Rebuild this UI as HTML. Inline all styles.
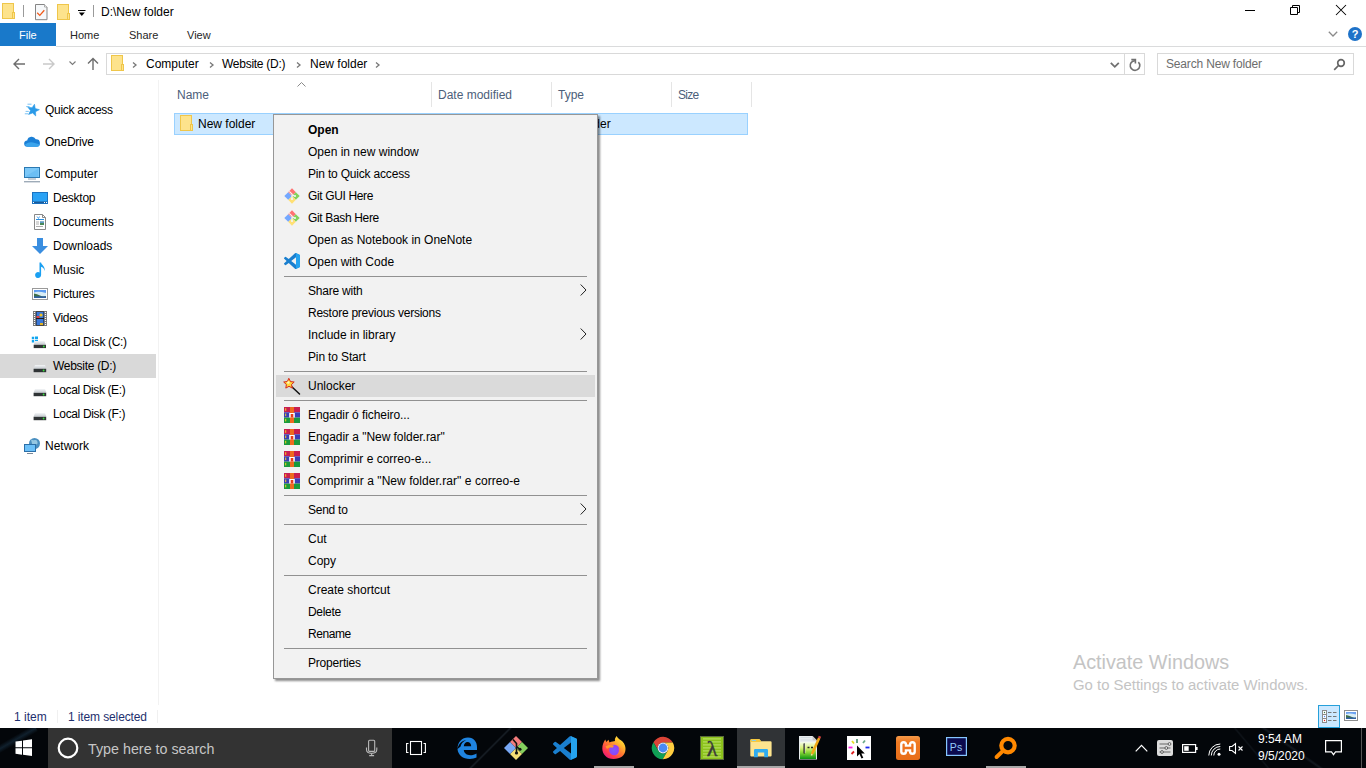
<!DOCTYPE html>
<html><head><meta charset="utf-8">
<style>
*{margin:0;padding:0;box-sizing:border-box}
html,body{width:1366px;height:768px;overflow:hidden;background:#fff;font-family:"Liberation Sans",sans-serif;font-size:12px;color:#000}
.a{position:absolute}
.t{position:absolute;white-space:nowrap;line-height:14px}
svg{position:absolute;overflow:visible}
</style></head><body>
<svg width="0" height="0" style="position:absolute">
<defs>
<linearGradient id="dtop" x1="0" y1="0" x2="0" y2="1"><stop offset="0" stop-color="#f4f6f8"/><stop offset="1" stop-color="#c4c9ce"/></linearGradient>
<symbol id="fold" viewBox="0 0 13 16"><rect x="0.5" y="0.5" width="11" height="15" fill="#fde38c" stroke="#efc64a"/><rect x="10.5" y="9.5" width="2" height="6" fill="#fde38c" stroke="#efc64a"/></symbol>
<symbol id="drive" viewBox="0 0 14 8"><path d="M2 0.5h10l1.5 3.5h-13z" fill="#d8d8d8"/><rect x="0.5" y="4" width="13" height="3.5" fill="#3a3a3a"/><rect x="10" y="5" width="2" height="1.2" fill="#5fd35f"/></symbol>
<symbol id="rar" viewBox="0 0 16 16"><rect x="0" y="0" width="16" height="5.3" fill="#c81e50"/><rect x="0" y="5.3" width="16" height="5.3" fill="#3b3db5"/><rect x="0" y="10.6" width="16" height="5.4" fill="#1a9a3c"/><rect x="6" y="0" width="4" height="16" fill="#ee6a1e"/><rect x="5.2" y="6" width="5.6" height="4.5" fill="#fff"/><rect x="6.7" y="7" width="2.6" height="3.5" fill="#e83a1a"/><rect x="1.2" y="1.2" width="1" height="2.6" fill="#f8d020"/><rect x="1.2" y="6.5" width="1" height="2.6" fill="#f8d020"/><rect x="1.2" y="11.8" width="1" height="2.6" fill="#f8d020"/></symbol>
<symbol id="git" viewBox="0 0 16 16"><path d="M8 0.3L11.85 4.15 8 8 4.15 4.15z" fill="#ff7272"/><path d="M11.85 4.15L15.7 8 11.85 11.85 8 8z" fill="#82d25a"/><path d="M8 8L11.85 11.85 8 15.7 4.15 11.85z" fill="#ffe074"/><path d="M4.15 4.15L8 8 4.15 11.85 0.3 8z" fill="#74a8ff"/><path d="M5.3 3.3L8 6v5.5M8 6.5l2.5 1.8" fill="none" stroke="#f2f2f2" stroke-width="1.1"/><circle cx="11" cy="8" r="1.1" fill="#f2f2f2"/><circle cx="8" cy="11" r="1.1" fill="#f2f2f2"/></symbol>
</defs></svg>

<!-- ===== TITLE BAR ===== -->
<svg style="left:2px;top:3px" width="13" height="16"><use href="#fold"/></svg>
<div class="a" style="left:23px;top:5px;width:1px;height:12px;background:#9a9a9a"></div>
<svg style="left:35px;top:4px" width="13" height="17" viewBox="0 0 13 17"><path d="M0.5 0.5h9l2.5 2.5v12.7H0.5z" fill="#f6f8fa" stroke="#858585"/><path d="M9.5 0.5v2.5h2.5" fill="#fff" stroke="#9a9a9a" stroke-width=".8"/><path d="M2.2 8.8L4.8 11.4 9.3 6.2" fill="none" stroke="#f05a1a" stroke-width="1.3"/></svg>
<svg style="left:57px;top:4px" width="13" height="16"><use href="#fold"/></svg>
<svg style="left:78px;top:10px" width="8" height="7" viewBox="0 0 8 7"><rect x="0" y="0" width="7.5" height="1" fill="#000"/><path d="M0.8 2.6h6L3.8 6z" fill="#000"/></svg>
<div class="a" style="left:93px;top:5px;width:1px;height:12px;background:#9a9a9a"></div>
<div class="t" style="left:101px;top:5px;">D:\New folder</div>
<!-- window controls -->
<div class="a" style="left:1245px;top:10px;width:10px;height:1px;background:#000"></div>
<svg style="left:1290px;top:5px" width="11" height="11"><path d="M0.5 2.5h7v7h-7z" fill="none" stroke="#000"/><path d="M2.5 2.5v-2h7v7h-2" fill="none" stroke="#000"/></svg>
<svg style="left:1336px;top:5px" width="10" height="10"><path d="M0 0L10 10M10 0L0 10" stroke="#000" stroke-width="1.05"/></svg>

<!-- ===== RIBBON ===== -->
<div class="a" style="left:0;top:23px;width:56px;height:23px;background:#1979ca"></div>
<div class="t" style="left:19px;top:28px;color:#fff;font-size:11px">File</div>
<div class="t" style="left:70px;top:28px;color:#262626;font-size:11px">Home</div>
<div class="t" style="left:129px;top:28px;color:#262626;font-size:11px">Share</div>
<div class="t" style="left:187px;top:28px;color:#262626;font-size:11px">View</div>
<div class="a" style="left:56px;top:46px;width:1310px;height:1px;background:#dadbdc"></div>
<svg style="left:1328px;top:31px" width="10" height="7"><path d="M0.8 0.8L5 5 9.2 0.8" fill="none" stroke="#8a8a8a" stroke-width="1.3"/></svg>
<svg style="left:1348px;top:27px" width="14" height="14"><circle cx="7" cy="7" r="7" fill="#1e72c8"/><text x="7" y="11.2" font-family="Liberation Sans" font-weight="bold" font-size="11" fill="#fff" text-anchor="middle">?</text></svg>

<!-- ===== ADDRESS BAR ===== -->
<svg style="left:13px;top:58px" width="13" height="12"><path d="M12 6H1.5M6 1L1 6l5 5" fill="none" stroke="#6d6d6d" stroke-width="1.4"/></svg>
<svg style="left:43px;top:58px" width="13" height="12"><path d="M0 6h10.5M6 1l5 5-5 5" fill="none" stroke="#c9c9c9" stroke-width="1.4"/></svg>
<svg style="left:69px;top:61px" width="7" height="5"><path d="M0.5 0.5L3.5 3.5 6.5 0.5" fill="none" stroke="#7a7a7a" stroke-width="1.1"/></svg>
<svg style="left:87px;top:57px" width="12" height="13"><path d="M6 13V1.5M1 6.5l5-5 5 5" fill="none" stroke="#6d6d6d" stroke-width="1.4"/></svg>
<div class="a" style="left:106px;top:53px;width:1039px;height:22px;border:1px solid #d9d9d9"></div>
<svg style="left:111px;top:55px" width="13" height="16"><use href="#fold"/></svg>
<svg style="left:132px;top:62px" width="5" height="6"><path d="M1 0.5L4 3 1 5.5" fill="none" stroke="#777" stroke-width="1.3"/></svg>
<div class="t" style="left:146px;top:57px">Computer</div>
<svg style="left:209px;top:62px" width="5" height="6"><path d="M1 0.5L4 3 1 5.5" fill="none" stroke="#777" stroke-width="1.3"/></svg>
<div class="t" style="left:222px;top:57px;letter-spacing:-0.27px">Website (D:)</div>
<svg style="left:296px;top:62px" width="5" height="6"><path d="M1 0.5L4 3 1 5.5" fill="none" stroke="#777" stroke-width="1.3"/></svg>
<div class="t" style="left:310px;top:57px">New folder</div>
<svg style="left:375px;top:62px" width="5" height="6"><path d="M1 0.5L4 3 1 5.5" fill="none" stroke="#777" stroke-width="1.3"/></svg>
<svg style="left:1110px;top:62px" width="10" height="7" viewBox="0 0 10 7"><path d="M0.8 0.8L4.8 4.8 8.8 0.8" fill="none" stroke="#707070" stroke-width="1.8"/></svg>
<div class="a" style="left:1124px;top:54px;width:1px;height:20px;background:#d9d9d9"></div>
<svg style="left:1129px;top:58px" width="12" height="14" viewBox="0 0 12 14"><path d="M6 2.7A4.8 4.8 0 1 0 9.39 4.11" fill="none" stroke="#707070" stroke-width="1.6"/><path d="M2.3 1.6H6.4V5.5" fill="none" stroke="#707070" stroke-width="1.6"/></svg>
<div class="a" style="left:1157px;top:53px;width:197px;height:22px;border:1px solid #d9d9d9"></div>
<div class="t" style="left:1166px;top:57px;color:#6d6d6d;letter-spacing:-0.17px">Search New folder</div>
<svg style="left:1333px;top:58px" width="13" height="13"><circle cx="8" cy="5" r="3.3" fill="none" stroke="#666" stroke-width="1.7"/><path d="M5.5 7.5L1.2 11.8" stroke="#666" stroke-width="1.7"/></svg>

<!-- ===== NAV PANE ===== -->
<div class="a" style="left:0;top:354px;width:156px;height:24px;background:#d9d9d9"></div>
<div class="a" style="left:158px;top:80px;width:1px;height:625px;background:#f2f2f2"></div>
<div class="t" style="left:45px;top:103px;letter-spacing:-0.3px">Quick access</div>
<div class="t" style="left:45px;top:135px;letter-spacing:-0.25px">OneDrive</div>
<div class="t" style="left:45px;top:167px">Computer</div>
<div class="t" style="left:53px;top:191px;letter-spacing:-0.25px">Desktop</div>
<div class="t" style="left:53px;top:215px">Documents</div>
<div class="t" style="left:53px;top:239px">Downloads</div>
<div class="t" style="left:53px;top:263px">Music</div>
<div class="t" style="left:53px;top:287px;letter-spacing:-0.22px">Pictures</div>
<div class="t" style="left:53px;top:311px;letter-spacing:-0.3px">Videos</div>
<div class="t" style="left:53px;top:335px;letter-spacing:-0.33px">Local Disk (C:)</div>
<div class="t" style="left:53px;top:359px;letter-spacing:-0.29px">Website (D:)</div>
<div class="t" style="left:53px;top:383px;letter-spacing:-0.38px">Local Disk (E:)</div>
<div class="t" style="left:53px;top:407px;letter-spacing:-0.35px">Local Disk (F:)</div>
<div class="t" style="left:45px;top:439px">Network</div>


<!-- nav icons -->
<svg style="left:24px;top:103px" width="17" height="14" viewBox="0 0 17 14"><path d="M10.49 1.24 L11.21 5.49 L15.37 6.65 L11.54 8.65 L11.72 12.96 L8.64 9.94 L4.59 11.45 L6.51 7.58 L3.83 4.20 L8.10 4.83z" fill="#2a9ae8" stroke="#2a9ae8" stroke-width=".6" stroke-linejoin="round"/><path d="M3.5 1.2h4M2.2 3.6h3.3M1.6 8.4h3.2M0.8 10.8h3.3" stroke="#6cbcf2" stroke-width=".9"/></svg>
<svg style="left:24px;top:136px" width="16" height="11" viewBox="0 0 16 11"><path d="M3.5 10.8a3.2 3.2 0 0 1-0.3-6.4A4.6 4.6 0 0 1 11.8 3.3a3.6 3.6 0 0 1 0.7 7.5z" fill="#1a7fd6"/><path d="M1 8.5Q5 5.5 9 6.5T15.8 8.5a3 3 0 0 1-3.3 2.3H3.5A3 3 0 0 1 1 8.5z" fill="#3aa4ec"/></svg>
<svg style="left:24px;top:167px" width="16" height="16" viewBox="0 0 16 16"><rect x="0.5" y="0.5" width="15" height="10" fill="#7cc8f8" stroke="#2b79b2"/><path d="M2 9L14 2v8H2z" fill="#5ab4f0" opacity=".5"/><rect x="4" y="11.5" width="8" height="1" fill="#8fa0b0"/><rect x="0" y="14" width="16" height="1.4" fill="#9eabb8"/></svg>
<svg style="left:32px;top:192px" width="16" height="12" viewBox="0 0 16 12"><rect x="0.5" y="0.5" width="15" height="11" fill="#2aa2f5" stroke="#1a72c2"/><rect x="1" y="9.5" width="14" height="1.6" fill="#1a5a9a"/><rect x="1" y="10" width="1" height="1" fill="#fff"/><rect x="12" y="10" width="1" height="1" fill="#fff"/><rect x="14" y="10" width="1" height="1" fill="#fff"/></svg>
<svg style="left:34px;top:214px" width="12" height="16" viewBox="0 0 12 16"><path d="M0.5 0.5h8l3 3v12h-11z" fill="#fff" stroke="#888"/><path d="M8.5 0.5v3h3" fill="none" stroke="#888"/><path d="M2 5.5h8" stroke="#2b8ee0" stroke-width="1"/><path d="M3 2.5l1.5 2 1-2" stroke="#2b8ee0" stroke-width="0.8" fill="none"/><path d="M2 8h3M2 10h3M2 12.5h7" stroke="#999" stroke-width="0.8"/><rect x="6" y="7.5" width="4" height="3.5" fill="#4a8a5a"/><rect x="6" y="7.5" width="4" height="1.2" fill="#6aa0f0"/></svg>
<svg style="left:32px;top:238px" width="16" height="16" viewBox="0 0 16 16"><path d="M5 0h6v8h5L8 16 0 8h5z" fill="#3a8ee0"/></svg>
<svg style="left:34px;top:262px" width="12" height="16" viewBox="0 0 12 16"><path d="M5.5 0.5h1.6c0.3 2.5 4.5 4 3.5 8.5-0.4-2.5-2-3.8-3.5-4.2V13a3 3 0 1 1-1.6-2.6z" fill="#1aa0f2"/></svg>
<svg style="left:32px;top:288px" width="16" height="12" viewBox="0 0 16 12"><rect x="0.5" y="0.5" width="15" height="11" fill="#fff" stroke="#9a9a9a"/><rect x="2" y="2" width="12" height="8" fill="#5a9af0"/><path d="M2 4.5Q6 3 14 5V10H2z" fill="#d8ecf5"/><path d="M2 5.5Q5 6 8 7.5T14 8V10H2z" fill="#3f6f48"/><rect x="2" y="8.3" width="12" height="1.7" fill="#3060a0"/></svg>
<svg style="left:33px;top:311px" width="14" height="15" viewBox="0 0 14 15"><rect x="0" y="0" width="14" height="15" fill="#777"/><rect x="3" y="0.5" width="8" height="14" fill="#1a1a1a"/><rect x="3.5" y="1" width="7" height="6" fill="#3a78d8"/><rect x="3.5" y="8" width="7" height="6" fill="#3a78d8"/><circle cx="8" cy="4" r="1.6" fill="#f0c020"/><rect x="3.5" y="5" width="3" height="2" fill="#e04040"/><rect x="7" y="12" width="3" height="2" fill="#e0b020"/><path d="M1.5 1v13M12.5 1v13" stroke="#fff" stroke-width="1.2" stroke-dasharray="1 1"/></svg>
<svg style="left:31px;top:336px" width="16" height="13" viewBox="0 0 16 13"><path d="M0.8 0.8h2.4v2.4H0.8zM4 0.5h3v2.7H4zM0.8 4h2.4v2.4H0.8zM4 4h3v2.8H4z" fill="#12a6f0"/><path d="M4 5h9.5l1.3 3.7H2.7z" fill="url(#dtop)"/><rect x="2.7" y="8.8" width="12.3" height="3.3" fill="#303436"/><circle cx="12.8" cy="10.5" r="0.9" fill="#36e03a"/></svg>
<svg style="left:33px;top:365px" width="14" height="8" viewBox="0 0 14 8"><path d="M2 0h10l1.4 3.7H0.6z" fill="url(#dtop)"/><rect x="0.6" y="3.8" width="12.6" height="3.4" fill="#303436"/><circle cx="10.6" cy="5.5" r="0.9" fill="#36e03a"/></svg>
<svg style="left:33px;top:389px" width="14" height="8" viewBox="0 0 14 8"><path d="M2 0h10l1.4 3.7H0.6z" fill="url(#dtop)"/><rect x="0.6" y="3.8" width="12.6" height="3.4" fill="#303436"/><circle cx="10.6" cy="5.5" r="0.9" fill="#36e03a"/></svg>
<svg style="left:33px;top:413px" width="14" height="8" viewBox="0 0 14 8"><path d="M2 0h10l1.4 3.7H0.6z" fill="url(#dtop)"/><rect x="0.6" y="3.8" width="12.6" height="3.4" fill="#303436"/><circle cx="10.6" cy="5.5" r="0.9" fill="#36e03a"/></svg>
<svg style="left:24px;top:437px" width="17" height="17" viewBox="0 0 17 17"><circle cx="10.5" cy="6.5" r="5.5" fill="#4a8fc0"/><path d="M7 2.5q2 1 4 0.5t2.5 2-2 2.5-3 1" fill="#a8d4ea" opacity=".8"/><rect x="0.5" y="7.5" width="11" height="7" fill="#6cc0f8" stroke="#2b6fa8"/><rect x="3" y="16" width="6" height="1" fill="#7a8898"/></svg>

<!-- ===== FILE LIST ===== -->
<svg style="left:297px;top:82px" width="9" height="5"><path d="M0.5 4.5L4.5 0.5 8.5 4.5" fill="none" stroke="#8a8a8a" stroke-width="1"/></svg>
<div class="t" style="left:177px;top:88px;color:#4c607a">Name</div>
<div class="a" style="left:431px;top:82px;width:1px;height:25px;background:#e5e5e5"></div>
<div class="t" style="left:438px;top:88px;color:#4c607a">Date modified</div>
<div class="a" style="left:551px;top:82px;width:1px;height:25px;background:#e5e5e5"></div>
<div class="t" style="left:558px;top:88px;color:#4c607a">Type</div>
<div class="a" style="left:671px;top:82px;width:1px;height:25px;background:#e5e5e5"></div>
<div class="t" style="left:678px;top:88px;color:#4c607a;letter-spacing:-0.7px">Size</div>
<div class="a" style="left:751px;top:82px;width:1px;height:25px;background:#e5e5e5"></div>
<div class="a" style="left:174px;top:113px;width:574px;height:22px;background:#cce8ff;border:1px solid #99d1ff"></div>
<svg style="left:180px;top:115px" width="13" height="16"><use href="#fold"/></svg>
<div class="t" style="left:198px;top:117px">New folder</div>
<div class="t" style="left:558px;top:117px">File folder</div>

<!-- ===== STATUS BAR ===== -->
<div class="t" style="left:14px;top:710px;color:#1e2f6e">1 item</div>
<div class="a" style="left:57px;top:710px;width:1px;height:13px;background:#f0f0f0"></div>
<div class="t" style="left:68px;top:710px;color:#1e2f6e;letter-spacing:-0.12px">1 item selected</div>
<div class="a" style="left:157px;top:710px;width:1px;height:13px;background:#f0f0f0"></div>
<div class="a" style="left:1318px;top:705px;width:22px;height:23px;background:#cce8ff;border:1px solid #26a0da"></div>
<svg style="left:1322px;top:710px" width="15" height="14" viewBox="0 0 15 14"><rect x="0.5" y="0.5" width="4" height="12" fill="#fff" stroke="#8a8a8a"/><path d="M0.5 4.5h4M0.5 8.5h4" stroke="#8a8a8a"/><circle cx="2.5" cy="2.5" r=".7" fill="#3a7a4a"/><circle cx="2.5" cy="6.5" r=".7" fill="#4a8af0"/><circle cx="2.5" cy="10.5" r=".7" fill="#e02020"/><path d="M6 2.5h3.5M11 2.5h3.5M6 6.5h3.5M11 6.5h3.5M6 10.5h3.5M11 10.5h3.5" stroke="#777" stroke-width="1"/></svg>
<svg style="left:1344px;top:710px" width="14" height="11" viewBox="0 0 14 11"><rect x="0.5" y="0.5" width="13" height="10" fill="#fff" stroke="#8e8e8e"/><rect x="2" y="2" width="10" height="7" fill="#6aa0f0"/><path d="M2 4q4-1 10 0.5V9H2z" fill="#d8ecf5"/><path d="M2 5q3 0.5 6 2t4 0.5V9H2z" fill="#3f6f48"/><rect x="2" y="7.5" width="10" height="1.5" fill="#3060a0"/></svg>
<!-- watermark -->
<div class="t" style="left:1073px;top:651px;color:#c4c4c4;font-size:19.8px;line-height:22px">Activate Windows</div>
<div class="t" style="left:1073px;top:677px;color:#c4c4c4;font-size:14.9px;line-height:17px">Go to Settings to activate Windows.</div>

<!-- ===== TASKBAR ===== -->
<div class="a" style="left:0;top:728px;width:1366px;height:40px;background:#03060a;overflow:hidden">
<div class="a" style="left:-20px;top:-30px;width:8px;height:120px;background:linear-gradient(90deg,transparent,rgba(40,80,110,.35),transparent);transform:rotate(60deg)"></div>
<div class="a" style="left:484px;top:-20px;width:3px;height:90px;background:linear-gradient(90deg,transparent,rgba(90,110,130,.25),transparent);transform:rotate(45deg)"></div>
<div class="a" style="left:1290px;top:-40px;width:4px;height:120px;background:linear-gradient(90deg,transparent,rgba(90,110,130,.18),transparent);transform:rotate(-55deg)"></div>
<div class="a" style="left:1250px;top:-40px;width:3px;height:120px;background:linear-gradient(90deg,transparent,rgba(90,110,130,.12),transparent);transform:rotate(-40deg)"></div>
</div>
<div class="a" style="left:48px;top:728px;width:344px;height:40px;background:#333"></div>
<svg style="left:15px;top:739px" width="18" height="18"><path d="M0.5 2.6L7 1.7v6.5H0.5zM8 1.55L17 0.3v7.9H8zM0.5 9.2H7v6.5L0.5 14.8zM8 9.2h9v7.9L8 15.85z" fill="#fff"/></svg>
<svg style="left:57px;top:737px" width="22" height="22"><circle cx="11" cy="11" r="9.3" fill="none" stroke="#fff" stroke-width="2.2"/></svg>
<div class="t" style="left:88px;top:741px;color:#c6c6c6;font-size:14.3px;line-height:17px">Type here to search</div>
<svg style="left:365px;top:739px" width="13" height="18" viewBox="0 0 13 18"><rect x="3.6" y="1.2" width="6.1" height="11.2" rx="1" fill="none" stroke="#b8b8b8" stroke-width="1.1"/><path d="M1.5 8.6V10.6Q1.5 14.4 6.65 14.4T11.8 10.6V8.6M6.65 14.4V16.5M4.2 16.6H9.1" fill="none" stroke="#b8b8b8" stroke-width="1.1"/></svg>


<!-- taskbar icons -->
<div class="a" style="left:737px;top:728px;width:48px;height:40px;background:#303336"></div>
<div class="a" style="left:737px;top:766px;width:48px;height:2px;background:#a8a8a8"></div>
<div class="a" style="left:594px;top:766px;width:40px;height:2px;background:#a8a8a8"></div>
<div class="a" style="left:986px;top:766px;width:40px;height:2px;background:#a8a8a8"></div>
<svg style="left:406px;top:741px" width="20" height="14" viewBox="0 0 20 14"><rect x="4.5" y="0.5" width="11" height="13" fill="none" stroke="#fff" stroke-width="1.1"/><path d="M2.5 2.5H0.6v9h1.9M17.5 2.5h1.9v9h-1.9" fill="none" stroke="#fff" stroke-width="1.1"/></svg>
<svg style="left:457px;top:737px" width="20" height="22" viewBox="0 0 20 22"><path fill="#1f84e0" fill-rule="evenodd" d="M0.5 12C0.5 5 5 0.5 11 0.5 17 0.5 20 5 20 10.5V13H6.8c.3 3.3 3 5.2 6.5 5.2 2.4 0 4.4-.7 6.2-1.8v4.2C17.6 21.5 15.4 22 12.8 22 5.8 22 1 18 0.5 12zM6.8 9.3h7.4c0-2.6-1.5-4.3-3.7-4.3-2 0-3.5 1.6-3.7 4.3zM0.5 12C1.5 6.5 5 3.5 9 3.2 5.5 4.5 4 7 3.6 9.6z"/></svg>
<svg style="left:504px;top:736px" width="24" height="24" viewBox="0 0 24 24"><path d="M12 0L18 6 12 12 6 6z" fill="#f47c7c"/><path d="M18 6L24 12 18 18 12 12z" fill="#86cf5e"/><path d="M12 12L18 18 12 24 6 18z" fill="#f5de76"/><path d="M6 6L12 12 6 18 0 12z" fill="#78a8f5"/><path d="M9 3.5l3.5 4v9M12.5 10.5l3 2.5" fill="none" stroke="#111" stroke-width="1.6"/><circle cx="12.5" cy="17" r="1.6" fill="#111"/><circle cx="16" cy="13.2" r="1.5" fill="#111"/></svg>
<svg style="left:553px;top:736px" width="24" height="24" viewBox="0 0 100 100"><path d="M70.9 99.3a6.2 6.2 0 0 0 5-.2l20.6-9.9A6.25 6.25 0 0 0 100 83.6V16.4a6.25 6.25 0 0 0-3.5-5.6L75.9.9a6.2 6.2 0 0 0-7.1 1.2L29.4 38 12.2 25a4.2 4.2 0 0 0-5.3.2l-5.5 5a4.2 4.2 0 0 0 0 6.2L16.3 50 1.4 63.6a4.2 4.2 0 0 0 0 6.2l5.5 5a4.2 4.2 0 0 0 5.3.2l17.2-13L68.8 97.9a6.2 6.2 0 0 0 2.1 1.4zM75 27.3L45.1 50 75 72.7z" fill="#1a7fcf" fill-rule="evenodd"/><path d="M75 .6l21.5 10.2a6.25 6.25 0 0 1 3.5 5.6v67.2a6.25 6.25 0 0 1-3.5 5.6L75 99.4z" fill="#25a3ef"/></svg>
<svg style="left:602px;top:736px" width="24" height="24" viewBox="0 0 24 24"><defs><linearGradient id="ffg" x1="1" y1="0" x2="0.2" y2="1"><stop offset="0" stop-color="#fff44f"/><stop offset=".3" stop-color="#ffc22e"/><stop offset=".55" stop-color="#ff7a30"/><stop offset=".8" stop-color="#ff3a50"/><stop offset="1" stop-color="#e8157e"/></linearGradient><radialGradient id="ffp" cx=".45" cy=".55" r=".6"><stop offset="0" stop-color="#7a5cff"/><stop offset="1" stop-color="#9a3af0"/></radialGradient></defs><path d="M14.5 0C16 2.5 18.5 4 20.5 5.5 23 8 23.5 11 23.5 13 23.5 19.5 18.5 23 11.5 23 4.5 23 0.3 18 0.3 12.5 0.3 9 1.5 6 3.3 3.5L4.3 6 6.5 3.8 7.5 6.5C9.5 5 12 5.5 13 5 12.5 3 13.5 1.5 14.5 0z" fill="url(#ffg)"/><circle cx="12.3" cy="14" r="5.2" fill="url(#ffp)"/><path d="M3.5 10.5C5.5 8.5 9.5 8.5 12 9.8L10.5 11.8C8.5 11.3 6.5 11.8 5 13z" fill="#ff9a2a"/><path d="M16.5 12.5C17.5 15 16.5 18 13.5 19.5 17.5 19 19.5 15.5 18.5 12z" fill="#ff8a30" opacity=".7"/></svg>
<svg style="left:651px;top:736px" width="24" height="24" viewBox="0 0 24 24"><path d="M21.81 6.6A11.2 11.2 0 0 0 2.42 6.2L7.32 14.7A5.4 5.4 0 0 1 12 6.6Z" fill="#db4437"/><path d="M2.42 6.2A11.2 11.2 0 0 0 11.77 23.2L16.68 14.7A5.4 5.4 0 0 1 7.32 14.7Z" fill="#10a055"/><path d="M11.77 23.2A11.2 11.2 0 0 0 21.81 6.6L12 6.6A5.4 5.4 0 0 1 16.68 14.7Z" fill="#ffcd40"/><circle cx="12" cy="12" r="5.4" fill="#f4f4f4"/><circle cx="12" cy="12" r="4.4" fill="#4a8af4"/></svg>
<svg style="left:700px;top:736px" width="24" height="24" viewBox="0 0 24 24"><rect x="0.5" y="0.5" width="23" height="23" fill="#8cc21c" stroke="#5a6a3a"/><path d="M3 2.8h18M3 5.8h18M3 8.8h18M3 11.8h18M3 14.8h18M3 17.8h18M3 20.8h18" stroke="#b2dc5a" stroke-width="1.2"/><text x="12" y="19.6" font-family="Liberation Serif" font-size="22" fill="#3a3a3a" stroke="#3a3a3a" stroke-width="0.5" text-anchor="middle">λ</text></svg>
<svg style="left:750px;top:739px" width="22" height="19" viewBox="0 0 22 19"><path d="M0.3 1.5Q0.3 0 1.5 0H8.5Q10 0 10.5 1.5L11 2.2H20.5Q21.6 2.2 21.6 3.3V16.4Q21.6 17.4 20.5 17.4H1.4Q0.3 17.4 0.3 16.4z" fill="#fde48e"/><path d="M0.3 1.5Q0.3 0 1.5 0H8.5Q10 0 10.5 1.5L11 2.9H0.3z" fill="#f6c93e"/><rect x="1.6" y="1" width="4.5" height="1.1" rx=".5" fill="#8fd0e0"/><path d="M4 18.2V11.2Q4 10 5.2 10H16.8Q18 10 18 11.2V18.2H14.2V13.6H7.8V18.2z" fill="#30acef"/></svg>
<svg style="left:798px;top:735px" width="24" height="25" viewBox="0 0 24 25"><defs><linearGradient id="npg" x1="0" y1="0" x2="0" y2="1"><stop offset="0" stop-color="#f4faf0"/><stop offset=".35" stop-color="#d8f27a"/><stop offset=".6" stop-color="#8ed83a"/><stop offset="1" stop-color="#0a9410"/></linearGradient></defs><path d="M1 1h13.5l4.5 4.5V24.5H1z" fill="#e8ecee"/><rect x="2" y="7" width="16" height="17" fill="url(#npg)"/><path d="M14.5 1v4.5H19" fill="#c8c8c8"/><path d="M2.5 2.5h11M2.5 5h12" stroke="#d4dde2" stroke-width="1"/><path d="M5.5 8.5h1.5v10H5.5z" fill="#1a1a1a"/><path d="M7 9v9" stroke="#f0f0f0" stroke-width=".6"/><path d="M9.5 12.5h2M13 12.5h2" stroke="#222" stroke-width="1.4"/><path d="M21.2 3L14 19" stroke="#f0a818" stroke-width="2.6"/><path d="M21.2 3l.8-1.8" stroke="#d84040" stroke-width="2.6"/><path d="M14 19l-.6 1.5" stroke="#f6d9a0" stroke-width="1.6"/></svg>
<svg style="left:847px;top:736px" width="24" height="24" viewBox="0 0 24 24"><rect width="24" height="24" fill="#fff"/><path d="M10 3v4" stroke="#5a9a7a" stroke-width="1.8"/><path d="M5 5l2 2.5" stroke="#e8e020" stroke-width="1.8"/><path d="M18 4.5l-2 2.5" stroke="#6aaa8a" stroke-width="1.8"/><path d="M1.5 11.5h4" stroke="#ff20e0" stroke-width="1.8"/><path d="M18.5 11.5h4" stroke="#1a2af0" stroke-width="1.8"/><path d="M4.5 18l2.5-2.5" stroke="#e02020" stroke-width="1.8"/><path d="M10 9.5v11l2.5-2.5 2 4.5 1.8-.8-2-4.3h3.5z" fill="#000"/></svg>
<svg style="left:896px;top:736px" width="24" height="24" viewBox="0 0 24 24"><defs><linearGradient id="xg" x1="0" y1="0" x2="0" y2="1"><stop offset="0" stop-color="#f59a4a"/><stop offset=".25" stop-color="#f07a22"/><stop offset="1" stop-color="#e86e1a"/></linearGradient></defs><rect width="24" height="24" rx="2.5" fill="url(#xg)"/><path d="M7.6 8.6V15.4M16.4 8.6V15.4M7.6 12H16.4" fill="none" stroke="#fff" stroke-width="7" stroke-linecap="round" stroke-linejoin="round"/><path d="M7.6 8.6V15.4M16.4 8.6V15.4M7.6 12H16.4" fill="none" stroke="#ee7420" stroke-width="2.3" stroke-linecap="round" stroke-linejoin="round"/></svg>
<svg style="left:946px;top:737px" width="21" height="19" viewBox="0 0 21 19"><rect x="0.6" y="0.6" width="19.8" height="17.8" fill="#0b0a4e" stroke="#86c6ff" stroke-width="1.2"/><text x="3.8" y="13.6" font-family="Liberation Sans" font-size="10.5" fill="#94ccfa" letter-spacing="0.3">Ps</text></svg>
<svg style="left:994px;top:736px" width="24" height="24" viewBox="0 0 24 24"><circle cx="14" cy="9.6" r="6.7" fill="none" stroke="#ff8800" stroke-width="4.2"/><path d="M9.2 14.6L2.6 21" stroke="#ff8800" stroke-width="4" stroke-linecap="round"/></svg>
<!-- tray -->
<svg style="left:1135px;top:744px" width="13" height="8" viewBox="0 0 13 8"><path d="M0.7 7.3L6.5 1.3l5.8 6" fill="none" stroke="#fff" stroke-width="1.2"/></svg>
<svg style="left:1157px;top:740px" width="16" height="16" viewBox="0 0 16 16"><rect x="0" y="0" width="16" height="16" rx="2" fill="#dcdcdc"/><path d="M2.5 4h11M2.5 8h11M2.5 12h11" stroke="#666" stroke-width="1"/><circle cx="12.5" cy="4" r="1.4" fill="#e8e8e8" stroke="#555" stroke-width=".9"/><circle cx="9.3" cy="8" r="1.4" fill="#e8e8e8" stroke="#555" stroke-width=".9"/><circle cx="5" cy="12" r="1.4" fill="#e8e8e8" stroke="#555" stroke-width=".9"/></svg>
<svg style="left:1182px;top:744px" width="16" height="9" viewBox="0 0 16 9"><rect x="0.6" y="0.6" width="13" height="7.8" fill="none" stroke="#fff" stroke-width="1.2"/><rect x="2.2" y="2.2" width="4.5" height="4.6" fill="#fff"/><rect x="14" y="3" width="1.6" height="3" fill="#fff"/></svg>
<svg style="left:1208px;top:743px" width="13" height="13" viewBox="0 0 13 13"><path d="M0.8 12.5A11.5 11.5 0 0 1 12.3 1M3.3 12.5A9 9 0 0 1 12.3 3.5M5.8 12.5A6.5 6.5 0 0 1 12.3 6" fill="none" stroke="#fff" stroke-width="1"/><circle cx="11" cy="11.3" r="1.5" fill="#fff"/></svg>
<svg style="left:1229px;top:743px" width="15" height="11" viewBox="0 0 15 11"><path d="M0.6 3.5h2.4L6.5 0.6v9.8L3 7.5H0.6z" fill="none" stroke="#fff" stroke-width="1.1"/><path d="M9.5 3.5l4 4M13.5 3.5l-4 4" stroke="#fff" stroke-width="1.1"/></svg>
<div class="t" style="left:1258px;top:732px;color:#fff">9:54 AM</div>
<div class="t" style="left:1258px;top:749px;color:#fff">9/5/2020</div>
<svg style="left:1325px;top:740px" width="17" height="16" viewBox="0 0 17 16"><path d="M0.6 0.6h15.8v11.3H10.5l-2 2.8-2-2.8H0.6z" fill="none" stroke="#fff" stroke-width="1.2"/></svg>
<div class="a" style="left:1361px;top:728px;width:1px;height:40px;background:#555"></div>

<!-- ===== CONTEXT MENU ===== -->
<div class="a" style="left:273px;top:114px;width:325px;height:565px;background:#f2f2f2;border:1px solid #979797;box-shadow:2px 2px 2px rgba(0,0,0,.45)"></div>
<div class="t" style="left:308px;top:123px;font-weight:bold">Open</div>
<div class="t" style="left:308px;top:145px">Open in new window</div>
<div class="t" style="left:308px;top:167px;letter-spacing:-0.189px">Pin to Quick access</div>
<div class="t" style="left:308px;top:189px;letter-spacing:-0.367px">Git GUI Here</div>
<svg style="left:284px;top:188px" width="16" height="16"><use href="#git"/></svg>
<div class="t" style="left:308px;top:211px;letter-spacing:-0.346px">Git Bash Here</div>
<svg style="left:284px;top:210px" width="16" height="16"><use href="#git"/></svg>
<div class="t" style="left:308px;top:233px">Open as Notebook in OneNote</div>
<div class="t" style="left:308px;top:255px">Open with Code</div>
<svg style="left:284px;top:253px" width="16" height="16" viewBox="0 0 100 100"><path d="M70.9 99.3a6.2 6.2 0 0 0 5-.2l20.6-9.9A6.25 6.25 0 0 0 100 83.6V16.4a6.25 6.25 0 0 0-3.5-5.6L75.9.9a6.2 6.2 0 0 0-7.1 1.2L29.4 38 12.2 25a4.2 4.2 0 0 0-5.3.2l-5.5 5a4.2 4.2 0 0 0 0 6.2L16.3 50 1.4 63.6a4.2 4.2 0 0 0 0 6.2l5.5 5a4.2 4.2 0 0 0 5.3.2l17.2-13L68.8 97.9a6.2 6.2 0 0 0 2.1 1.4zM75 27.3L45.1 50 75 72.7z" fill="#1a7fcf" fill-rule="evenodd"/><path d="M75 .6l21.5 10.2a6.25 6.25 0 0 1 3.5 5.6v67.2a6.25 6.25 0 0 1-3.5 5.6L75 99.4z" fill="#25a3ef"/></svg>
<div class="a" style="left:284px;top:276px;width:303px;height:1px;background:#919191"></div>
<div class="t" style="left:308px;top:284px;letter-spacing:-0.220px">Share with</div>
<svg style="left:580px;top:284px" width="7" height="12"><path d="M0.7 0.5L6 6 0.7 11.5" fill="none" stroke="#222" stroke-width="1"/></svg>
<div class="t" style="left:308px;top:306px;letter-spacing:-0.240px">Restore previous versions</div>
<div class="t" style="left:308px;top:328px">Include in library</div>
<svg style="left:580px;top:328px" width="7" height="12"><path d="M0.7 0.5L6 6 0.7 11.5" fill="none" stroke="#222" stroke-width="1"/></svg>
<div class="t" style="left:308px;top:350px;letter-spacing:-0.142px">Pin to Start</div>
<div class="a" style="left:284px;top:371px;width:303px;height:1px;background:#919191"></div>
<div class="a" style="left:276px;top:375px;width:319px;height:22px;background:#dadada"></div>
<div class="t" style="left:308px;top:379px">Unlocker</div>
<svg style="left:283px;top:378px" width="18" height="18" viewBox="0 0 18 18"><path d="M8 8l8.5 8" stroke="#111" stroke-width="1.5" stroke-linecap="round"/><path d="M5.8 0.3l1.7 3.3 3.7.4-2.7 2.5.8 3.6L6 8.3 2.8 10.1l.6-3.6L.7 4l3.7-.5z" fill="#ffd83a" stroke="#d8281a" stroke-width="1"/><circle cx="5.3" cy="4.5" r="1.2" fill="#fff6c0"/></svg>
<div class="a" style="left:284px;top:400px;width:303px;height:1px;background:#919191"></div>
<div class="t" style="left:308px;top:408px;letter-spacing:-0.076px">Engadir ó ficheiro...</div>
<svg style="left:284px;top:407px" width="16" height="16"><use href="#rar"/></svg>
<div class="t" style="left:308px;top:430px;letter-spacing:-0.050px">Engadir a &quot;New folder.rar&quot;</div>
<svg style="left:284px;top:429px" width="16" height="16"><use href="#rar"/></svg>
<div class="t" style="left:308px;top:452px">Comprimir e correo-e...</div>
<svg style="left:284px;top:451px" width="16" height="16"><use href="#rar"/></svg>
<div class="t" style="left:308px;top:474px;letter-spacing:0.054px">Comprimir a &quot;New folder.rar&quot; e correo-e</div>
<svg style="left:284px;top:473px" width="16" height="16"><use href="#rar"/></svg>
<div class="a" style="left:284px;top:495px;width:303px;height:1px;background:#919191"></div>
<div class="t" style="left:308px;top:503px;letter-spacing:-0.257px">Send to</div>
<svg style="left:580px;top:503px" width="7" height="12"><path d="M0.7 0.5L6 6 0.7 11.5" fill="none" stroke="#222" stroke-width="1"/></svg>
<div class="a" style="left:284px;top:524px;width:303px;height:1px;background:#919191"></div>
<div class="t" style="left:308px;top:532px">Cut</div>
<div class="t" style="left:308px;top:554px">Copy</div>
<div class="a" style="left:284px;top:575px;width:303px;height:1px;background:#919191"></div>
<div class="t" style="left:308px;top:583px">Create shortcut</div>
<div class="t" style="left:308px;top:605px;letter-spacing:-0.300px">Delete</div>
<div class="t" style="left:308px;top:627px;letter-spacing:-0.433px">Rename</div>
<div class="a" style="left:284px;top:648px;width:303px;height:1px;background:#919191"></div>
<div class="t" style="left:308px;top:656px;letter-spacing:-0.190px">Properties</div>
</body></html>
